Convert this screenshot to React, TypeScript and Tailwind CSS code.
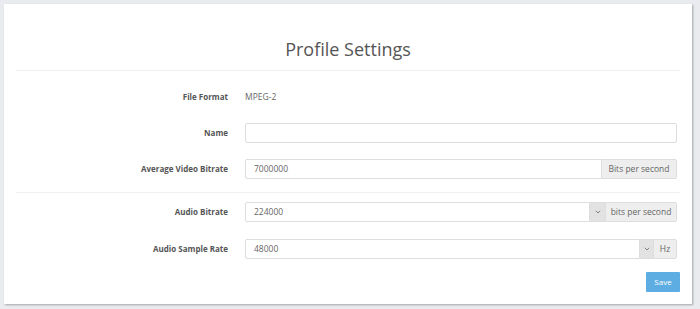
import React from "react";

const font = { fontFamily: '"Open Sans", "Noto Sans", sans-serif' };

function Chevron() {
  return (
    <svg width="6" height="4" viewBox="0 0 6 4" fill="none">
      <path d="M0.8 0.8 L3 3 L5.2 0.8" stroke="#777" strokeWidth="0.9" />
    </svg>
  );
}

function Row({ label, children }: { label: string; children: React.ReactNode }) {
  return (
    <div className="flex items-center h-[20px]">
      <div className="w-[212px] text-right text-[8px] font-bold text-[#555]">{label}</div>
      <div className="ml-[17px] w-[432px] flex h-full">{children}</div>
    </div>
  );
}

export default function App() {
  return (
    <div className="w-[700px] h-[309px] bg-[#e9ebee] pt-[4px] pl-[4px] pr-[8px] pb-[5px]" style={font}>
      <div className="h-[300px] bg-white shadow-[1px_1px_2px_rgba(0,0,0,0.3)] px-[12px] flex flex-col">
        <div className="h-[67px] flex items-end justify-center pb-[8px] border-b border-[#eeeeee]">
          <h1 className="text-[18px] leading-[26px] text-[#555]">Profile Settings</h1>
        </div>
        <div className="mt-[16px] flex flex-col">
          <Row label="File Format">
            <div className="flex items-center text-[8.5px] text-[#666]">MPEG-2</div>
          </Row>
          <div className="mt-[16px]">
            <Row label="Name">
              <div className="flex-1 border border-[#dddddd] rounded-[2px] bg-white" />
            </Row>
          </div>
          <div className="mt-[16px]">
            <Row label="Average Video Bitrate">
              <div className="flex-1 border border-[#dddddd] rounded-l-[2px] bg-white flex items-center pl-[8px] text-[8.5px] text-[#666]">
                7000000
              </div>
              <div className="w-[75px] border border-l-0 border-[#dddddd] rounded-r-[2px] bg-[#eeeeee] flex items-center justify-center text-[8.5px] text-[#666]">
                Bits per second
              </div>
            </Row>
          </div>
          <div className="mt-[13px] border-t border-[#f0f0f0]" />
          <div className="mt-[9px]">
            <Row label="Audio Bitrate">
              <div className="flex-1 border border-[#dddddd] rounded-l-[2px] bg-white flex items-center pl-[8px] text-[8.5px] text-[#666]">
                224000
              </div>
              <div className="w-[15px] border-y border-[#dddddd] bg-[#e2e2e2] flex items-center justify-center">
                <Chevron />
              </div>
              <div className="w-[72px] border border-[#dddddd] rounded-r-[2px] bg-[#eeeeee] flex items-center justify-center text-[8.5px] text-[#666]">
                bits per second
              </div>
            </Row>
          </div>
          <div className="mt-[17px]">
            <Row label="Audio Sample Rate">
              <div className="flex-1 border border-[#dddddd] rounded-l-[2px] bg-white flex items-center pl-[8px] text-[8.5px] text-[#666]">
                48000
              </div>
              <div className="w-[13px] border-y border-[#dddddd] bg-[#e2e2e2] flex items-center justify-center">
                <Chevron />
              </div>
              <div className="w-[24px] border border-[#dddddd] rounded-r-[2px] bg-[#eeeeee] flex items-center justify-center text-[8.5px] text-[#666]">
                Hz
              </div>
            </Row>
          </div>
          <div className="mt-[13px] flex justify-end">
            <button className="w-[34px] h-[20px] bg-[#5dade2] rounded-[1px] text-white text-[8px]">Save</button>
          </div>
        </div>
      </div>
    </div>
  );
}
